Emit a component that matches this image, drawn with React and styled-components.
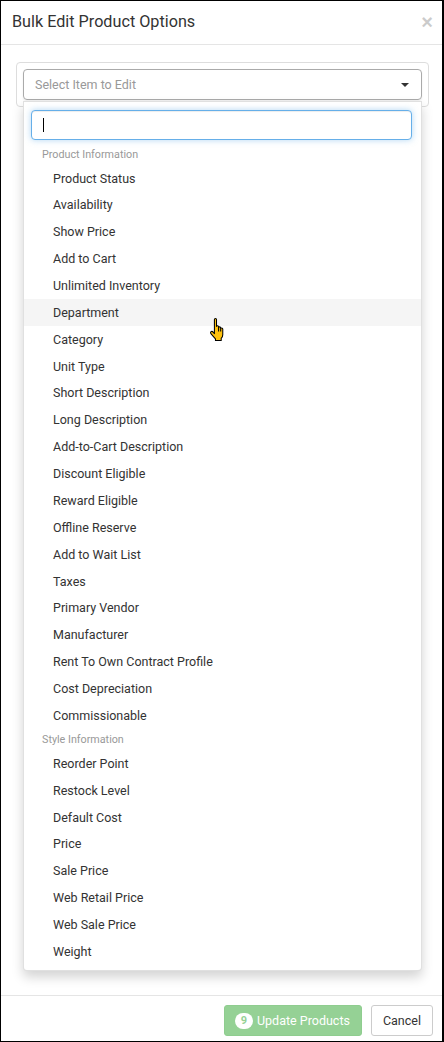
import React from "react";
import styled, { createGlobalStyle } from "styled-components";

const GlobalStyle = createGlobalStyle`
  html, body {
    margin: 0;
    padding: 0;
    background: #fff;
  }
  body {
    font-family: Roboto, "Liberation Sans", Arial, sans-serif;
    color: #333;
  }
`;

const productInfo = [
  "Product Status",
  "Availability",
  "Show Price",
  "Add to Cart",
  "Unlimited Inventory",
  "Department",
  "Category",
  "Unit Type",
  "Short Description",
  "Long Description",
  "Add-to-Cart Description",
  "Discount Eligible",
  "Reward Eligible",
  "Offline Reserve",
  "Add to Wait List",
  "Taxes",
  "Primary Vendor",
  "Manufacturer",
  "Rent To Own Contract Profile",
  "Cost Depreciation",
  "Commissionable",
];

const styleInfo = [
  "Reorder Point",
  "Restock Level",
  "Default Cost",
  "Price",
  "Sale Price",
  "Web Retail Price",
  "Web Sale Price",
  "Weight",
];

// the row under the mouse pointer in the screenshot
const hovered = "Department";

export default function App() {
  return (
    <>
      <GlobalStyle />
      <Frame>
        <Header>
          <Title>Bulk Edit Product Options</Title>
          <CloseButton type="button">×</CloseButton>
        </Header>

        <Body>
          <Panel>
            <SelectBox>
              <Placeholder>Select Item to Edit</Placeholder>
              <Caret />
            </SelectBox>

            {/* open dropdown drops over the rest of the modal */}
            <Dropdown>
              <SearchWrap>
                <SearchInput type="text" defaultValue="" />
                <TextCaret />
              </SearchWrap>
              <OptionList>
                <GroupLabel>Product Information</GroupLabel>
                {productInfo.map((name) => (
                  <OptionItem key={name} $hover={name === hovered}>
                    {name}
                  </OptionItem>
                ))}
                <GroupLabel>Style Information</GroupLabel>
                {styleInfo.map((name) => (
                  <OptionItem key={name} $hover={name === hovered}>
                    {name}
                  </OptionItem>
                ))}
              </OptionList>
            </Dropdown>
          </Panel>
        </Body>

        <Footer>
          <PrimaryButton type="button">
            <Badge>9</Badge>
            Update Products
          </PrimaryButton>
          <DefaultButton type="button">Cancel</DefaultButton>
        </Footer>

        <HandCursor width="17" height="23" viewBox="0 0 15 22">
          <path
            d="M5.5 1.5 Q5.5 0.5 6.5 0.5 Q7.5 0.5 7.5 1.5 V8 Q7.5 7.5 8.5 7.5 Q9.5 7.5 9.5 8.5 V9 Q9.5 8.5 10.5 8.5 Q11.5 8.5 11.5 9.5 V10 Q11.5 9.5 12.5 9.5 Q13.5 9.5 13.5 10.5 V16 Q13.5 18 12 19.5 V21.5 H6.5 V20 L2.5 15.5 Q1.2 13.8 2.3 13 Q3.4 12.4 4.5 13.8 L5.5 15 Z"
            fill="#ffc20e"
            stroke="#000"
            strokeWidth="1"
            strokeLinejoin="round"
          />
          <path d="M9.5 9 V13 M11.5 10 V13" stroke="#000" strokeWidth="1" fill="none" />
        </HandCursor>
      </Frame>
    </>
  );
}

/*******************************
 *   STYLED COMPONENTS          *
 *******************************/
const Frame = styled.div`
  position: relative;
  box-sizing: border-box;
  width: 444px;
  height: 1042px;
  border: 1px solid #000;
  border-right-width: 2px;
  display: flex;
  flex-direction: column;
  overflow: hidden;
  background: #fff;
`;

const Header = styled.div`
  height: 43px;
  border-bottom: 1px solid #e5e5e5;
  display: flex;
  align-items: center;
  justify-content: space-between;
  padding: 0 9px 2px 11px;
  box-sizing: border-box;
  height: 44px;
`;

const Title = styled.h4`
  margin: 0;
  font-size: 16.2px;
  font-weight: 400;
  color: #333;
`;

const CloseButton = styled.button`
  border: none;
  background: none;
  padding: 0;
  font-family: "Liberation Sans", Arial, sans-serif;
  font-size: 20px;
  font-weight: 700;
  line-height: 1;
  color: #000;
  opacity: 0.2;
`;

const Body = styled.div`
  flex: 1;
  padding: 17px 13px 0 15px;
`;

const Panel = styled.div`
  position: relative;
  border: 1px solid #ddd;
  border-radius: 4px;
  padding: 6px 6px 6px 6px;
`;

const SelectBox = styled.div`
  box-sizing: border-box;
  height: 31px;
  border: 1px solid #aaa;
  border-radius: 4px;
  display: flex;
  align-items: center;
  justify-content: space-between;
  padding: 0 12px 0 11px;
  box-shadow: 0 1px 2px rgba(0, 0, 0, 0.08);
`;

const Placeholder = styled.span`
  font-size: 12.5px;
  color: #999;
`;

const Caret = styled.span`
  width: 0;
  height: 0;
  border-left: 4px solid transparent;
  border-right: 4px solid transparent;
  border-top: 4px solid #333;
`;

const Dropdown = styled.div`
  position: absolute;
  top: 38px;
  left: 6px;
  right: 6px;
  z-index: 10;
  background: #fff;
  border: 1px solid rgba(0, 0, 0, 0.12);
  border-radius: 0 0 4px 4px;
  box-shadow: 0 6px 12px rgba(0, 0, 0, 0.175);
  padding-bottom: 5px;
`;

const SearchWrap = styled.div`
  position: relative;
  padding: 8px 9px 3.5px 7px;
`;

const SearchInput = styled.input`
  box-sizing: border-box;
  display: block;
  width: 100%;
  height: 30px;
  border: 1px solid #66afe9;
  border-radius: 4px;
  outline: none;
  box-shadow: inset 0 1px 1px rgba(0, 0, 0, 0.075), 0 0 6px rgba(102, 175, 233, 0.5);
  font-family: Roboto, "Liberation Sans", Arial, sans-serif;
  font-size: 12.5px;
  padding: 0 10px;
  caret-color: transparent;
`;

const TextCaret = styled.span`
  position: absolute;
  left: 19px;
  top: 16px;
  width: 1px;
  height: 14px;
  background: #000;
`;

const OptionList = styled.ul`
  list-style: none;
  margin: 0;
  padding: 0;
`;

const GroupLabel = styled.li`
  height: 21.2px;
  display: flex;
  align-items: center;
  padding-left: 18px;
  font-size: 10.75px;
  color: #999;
`;

const OptionItem = styled.li`
  height: 26.86px;
  display: flex;
  align-items: center;
  padding-left: 29px;
  font-size: 12.5px;
  color: #333;
  background: ${(p) => (p.$hover ? "#f5f5f5" : "transparent")};
`;

const Footer = styled.div`
  box-sizing: border-box;
  height: 46px;
  flex-shrink: 0;
  border-top: 1px solid #e5e5e5;
  display: flex;
  justify-content: flex-end;
  align-items: flex-start;
  gap: 9px;
  padding: 9px 9px 0 0;
`;

const PrimaryButton = styled.button`
  box-sizing: border-box;
  height: 31px;
  display: flex;
  align-items: center;
  gap: 4px;
  padding: 0 11px 0 10px;
  border: 1px solid #8fcd8f;
  border-radius: 3px;
  background: #95d195;
  color: #fff;
  font-family: Roboto, "Liberation Sans", Arial, sans-serif;
  font-size: 12.5px;
`;

const Badge = styled.span`
  min-width: 18px;
  height: 16px;
  border-radius: 8px;
  background: #fff;
  color: #95d195;
  font-size: 11px;
  font-weight: 700;
  display: inline-flex;
  align-items: center;
  justify-content: center;
`;

const DefaultButton = styled.button`
  box-sizing: border-box;
  height: 31px;
  padding: 0 11px;
  border: 1px solid #ccc;
  border-radius: 3px;
  background: #fff;
  color: #333;
  font-family: Roboto, "Liberation Sans", Arial, sans-serif;
  font-size: 12.5px;
`;

const HandCursor = styled.svg`
  position: absolute;
  left: 207px;
  top: 317px;
  z-index: 20;
`;
